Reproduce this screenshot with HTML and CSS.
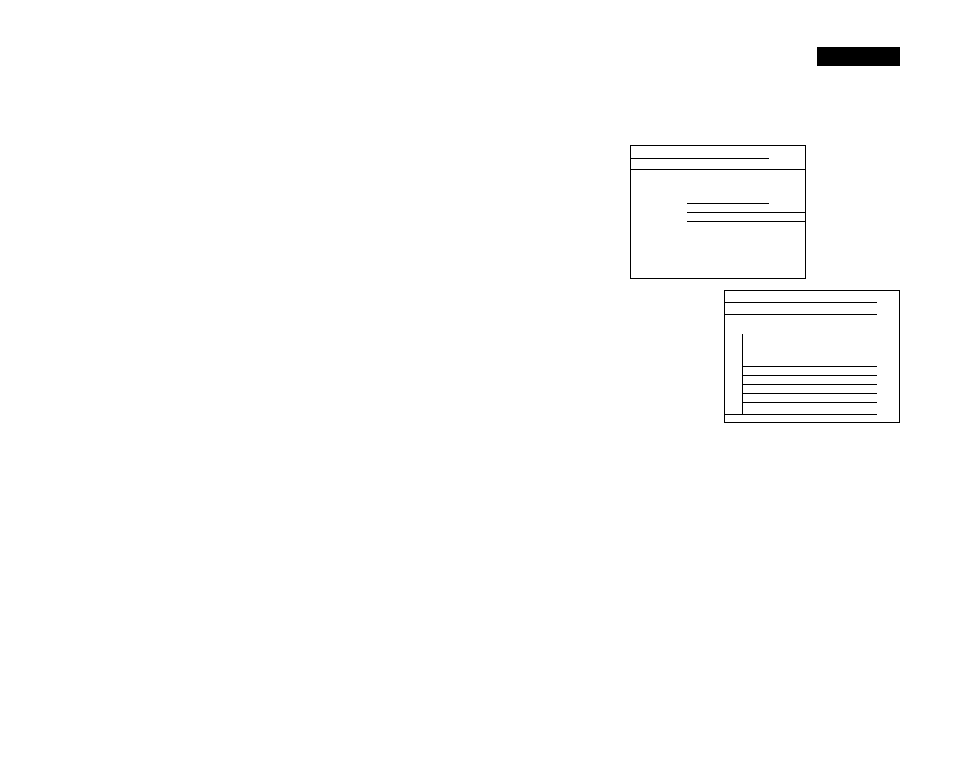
FILE: index.html
```html
<!DOCTYPE html>
<html lang="en">
<head>
    <meta charset="UTF-8">
    <meta name="viewport" content="width=device-width, initial-scale=1.0">
    <title>Form</title>
    <link rel="stylesheet" href="styles.css">
</head>
<body>
<div class="page">
    <div class="tag"></div>

    <div class="panel panel-a">
        <div class="panel-head">
            <div class="title-line"></div>
        </div>
        <div class="fields">
            <div class="field short"></div>
            <div class="field"></div>
            <div class="field"></div>
        </div>
    </div>

    <div class="panel panel-b">
        <div class="b-line"></div>
        <div class="b-line"></div>
        <div class="list">
            <div class="row first"></div>
            <div class="row"></div>
            <div class="row"></div>
            <div class="row"></div>
            <div class="row"></div>
            <div class="row last"></div>
        </div>
        <div class="foot"></div>
    </div>
</div>
</body>
</html>
```

FILE: styles.css
```css
html, body {
    margin: 0;
    padding: 0;
    background: #fff;
    font-family: "Liberation Sans", Arial, sans-serif;
}

.page {
    width: 954px;
    height: 784px;
    padding-top: 47px;
    box-sizing: border-box;
}

.tag {
    width: 83px;
    height: 19px;
    margin-left: 817px;
    background: #000;
}

.panel {
    width: 176px;
    height: 133px;
    border: solid 1px #000;
    box-sizing: border-box;
}

.panel-a {
    height: 134px;
    margin-left: 630px;
    margin-top: 79px;
}

.panel-head {
    border-bottom: solid 1px #000;
}

.title-line {
    width: 138px;
    height: 12px;
    margin-bottom: 10px;
    border-bottom: solid 1px #000;
}

.fields {
    margin-left: 56px;
    padding-top: 25px;
}

.field {
    height: 8px;
    border-bottom: solid 1px #000;
}

.field.short {
    width: 82px;
}

.panel-b {
    margin-left: 724px;
    margin-top: 11px;
}

.b-line {
    width: 152px;
    height: 11px;
    border-bottom: solid 1px #000;
}

.list {
    margin-top: 19px;
    margin-left: 17px;
    width: 135px;
    border-left: solid 1px #000;
    box-sizing: border-box;
}

.row {
    height: 8px;
    border-bottom: solid 1px #000;
}

.row.first {
    height: 31px;
}

.row.first {
    height: 32px;
}

.row.last {
    height: 11px;
    border-bottom: none;
}

.foot {
    width: 152px;
    border-top: solid 1px #000;
}
```
